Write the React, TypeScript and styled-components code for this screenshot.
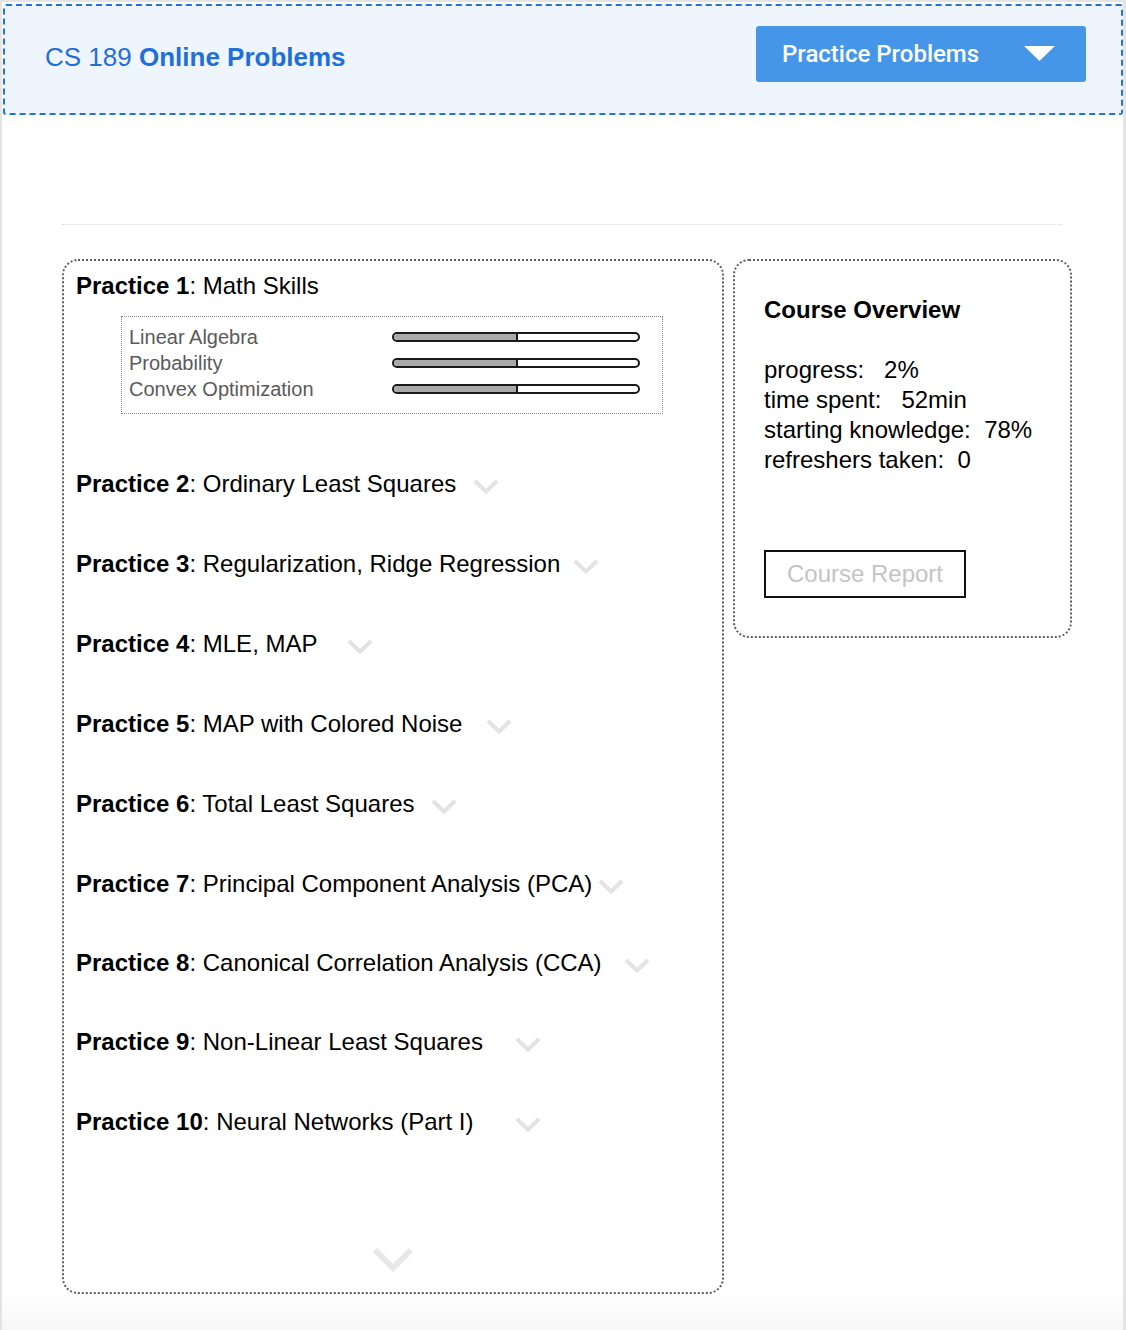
import React from "react";
import styled, { createGlobalStyle } from "styled-components";

const GlobalStyle = createGlobalStyle`
  html, body {
    margin: 0;
    padding: 0;
    background: #e4e4e4;
  }
  body {
    font-family: "Liberation Sans", Arial, Helvetica, sans-serif;
    color: #000;
  }
`;

const Page = styled.div`
  margin: 2px 3px 0 2px;
  min-height: 1328px;
  background: linear-gradient(to bottom, #ffffff 0, #ffffff 1292px, #f6f6f6 1328px);
  padding-top: 2px;
  box-sizing: border-box;
`;

const Header = styled.header`
  margin-left: 1px;
  height: 111px;
  box-sizing: border-box;
  border: 2px dashed #2470dc;
  border-radius: 3px;
  background: #eff5fd;
  display: flex;
  align-items: center;
  justify-content: space-between;
  padding: 0 35px 4px 40px;
`;

const Title = styled.h1`
  margin: 0;
  font-size: 26px;
  font-weight: normal;
  color: #1f6fd9;
  b {
    font-weight: bold;
  }
`;

const MenuButton = styled.button`
  width: 330px;
  height: 56px;
  margin-bottom: 8px;
  border: none;
  border-radius: 3px;
  background: #4596e9;
  color: #fff;
  font-family: Roboto, "Liberation Sans", Arial, sans-serif;
  font-size: 24px;
  font-weight: 500;
  display: flex;
  align-items: center;
  justify-content: space-between;
  padding: 0 31px 0 26px;
  cursor: pointer;
`;

const Content = styled.main`
  padding-left: 60px;
`;

const Separator = styled.hr`
  margin: 109px 0 0 0;
  width: 1000px;
  border: none;
  border-top: 1px dotted #d6d6d6;
  height: 0;
`;

const Cards = styled.div`
  margin-top: 34px;
  display: flex;
  align-items: flex-start;
  gap: 9px;
`;

const Card = styled.section`
  border: 2px dotted #5e5e5e;
  border-radius: 16px;
  box-sizing: border-box;
`;

const PracticeCard = styled(Card)`
  width: 662px;
  height: 1035px;
  padding: 11px 13px 0 12px;
  display: flex;
  flex-direction: column;
`;

const OverviewCard = styled(Card)`
  width: 339px;
  padding: 35px 30px 38px 29px;
`;

const PracticeTitle = styled.div`
  font-size: 24px;
  line-height: 28px;
  white-space: nowrap;
`;

const SkillBox = styled.div`
  margin: 16px 0 0 45px;
  width: 542px;
  box-sizing: border-box;
  border: 1px dotted #8a8a8a;
  padding: 7px 7px 11px 7px;
`;

const SkillRow = styled.div`
  display: flex;
  align-items: center;
  height: 26px;
`;

const SkillLabel = styled.span`
  width: 263px;
  font-size: 20px;
  color: #5a5a5a;
`;

const Bar = styled.div`
  width: 248px;
  height: 10px;
  box-sizing: border-box;
  border: 2px solid #1a1a1a;
  border-radius: 5px;
  background: #fff;
  overflow: hidden;
  display: flex;
`;

const BarFill = styled.div`
  height: 100%;
  background: #a9a9a9;
  border-right: 2px solid #1a1a1a;
`;

const PracticeList = styled.div`
  margin-top: 30px;
  display: flex;
  flex-direction: column;
`;

const PracticeRow = styled.div<{ $last?: boolean }>`
  height: ${(p) => (p.$last ? 78 : 80)}px;
  display: flex;
  align-items: center;
`;

const Chevron = styled.svg<{ $gap: number }>`
  margin-left: ${(p) => p.$gap}px;
  margin-top: 4px;
  flex: none;
`;

const BottomChevron = styled.svg`
  margin: auto auto 19px auto;
  display: block;
`;

const OverviewTitle = styled.h2`
  margin: 0;
  font-size: 24px;
  line-height: 28px;
  font-weight: bold;
`;

const Stats = styled.div`
  margin-top: 31px;
  font-size: 24px;
  line-height: 30px;
  white-space: pre;
`;

const ReportButton = styled.button`
  margin-top: 75px;
  width: 202px;
  height: 48px;
  border: 2px solid #111;
  background: #fff;
  color: #c4c4c4;
  font-family: "Liberation Sans", Arial, sans-serif;
  font-size: 24px;
  padding: 0;
  display: block;
`;

const skills = ["Linear Algebra", "Probability", "Convex Optimization"];

const practices: { n: number; name: string; gap: number }[] = [
  { n: 2, name: "Ordinary Least Squares", gap: 17 },
  { n: 3, name: "Regularization, Ridge Regression", gap: 13 },
  { n: 4, name: "MLE, MAP", gap: 30 },
  { n: 5, name: "MAP with Colored Noise", gap: 24 },
  { n: 6, name: "Total Least Squares", gap: 17 },
  { n: 7, name: "Principal Component Analysis (PCA)", gap: 6 },
  { n: 8, name: "Canonical Correlation Analysis (CCA)", gap: 22 },
  { n: 9, name: "Non-Linear Least Squares", gap: 32 },
  { n: 10, name: "Neural Networks (Part I)", gap: 41 },
];

export default function App() {
  return (
    <>
      <GlobalStyle />
      <Page>
        <Header>
          <Title>
            CS 189 <b>Online Problems</b>
          </Title>
          <MenuButton>
            <span>Practice Problems</span>
            <svg width="31" height="15" viewBox="0 0 31 15">
              <polygon points="0,0 31,0 15.5,15" fill="#fff" />
            </svg>
          </MenuButton>
        </Header>
        <Content>
          <Separator />
          <Cards>
            <PracticeCard>
              <PracticeTitle>
                <b>Practice 1</b>: Math Skills
              </PracticeTitle>
              <SkillBox>
                {skills.map((s) => (
                  <SkillRow key={s}>
                    <SkillLabel>{s}</SkillLabel>
                    <Bar>
                      <BarFill style={{ width: "50%" }} />
                    </Bar>
                  </SkillRow>
                ))}
              </SkillBox>
              <PracticeList>
                {practices.map((p, i) => (
                  <PracticeRow key={p.n} $last={i === 6}>
                    <PracticeTitle>
                      <b>Practice {p.n}</b>: {p.name}
                    </PracticeTitle>
                    <Chevron $gap={p.gap} width="26" height="15" viewBox="0 0 26 15">
                      <polyline
                        points="2,2 13,12.5 24,2"
                        fill="none"
                        stroke="#e3e3e3"
                        strokeWidth="4"
                      />
                    </Chevron>
                  </PracticeRow>
                ))}
              </PracticeList>
              <BottomChevron width="42" height="26" viewBox="0 0 42 26">
                <polyline
                  points="3,3 21,21 39,3"
                  fill="none"
                  stroke="#e8e8e8"
                  strokeWidth="6"
                />
              </BottomChevron>
            </PracticeCard>
            <OverviewCard>
              <OverviewTitle>Course Overview</OverviewTitle>
              <Stats>
                {"progress:   2%\ntime spent:   52min\nstarting knowledge:  78%\nrefreshers taken:  0"}
              </Stats>
              <ReportButton>Course Report</ReportButton>
            </OverviewCard>
          </Cards>
        </Content>
      </Page>
    </>
  );
}
